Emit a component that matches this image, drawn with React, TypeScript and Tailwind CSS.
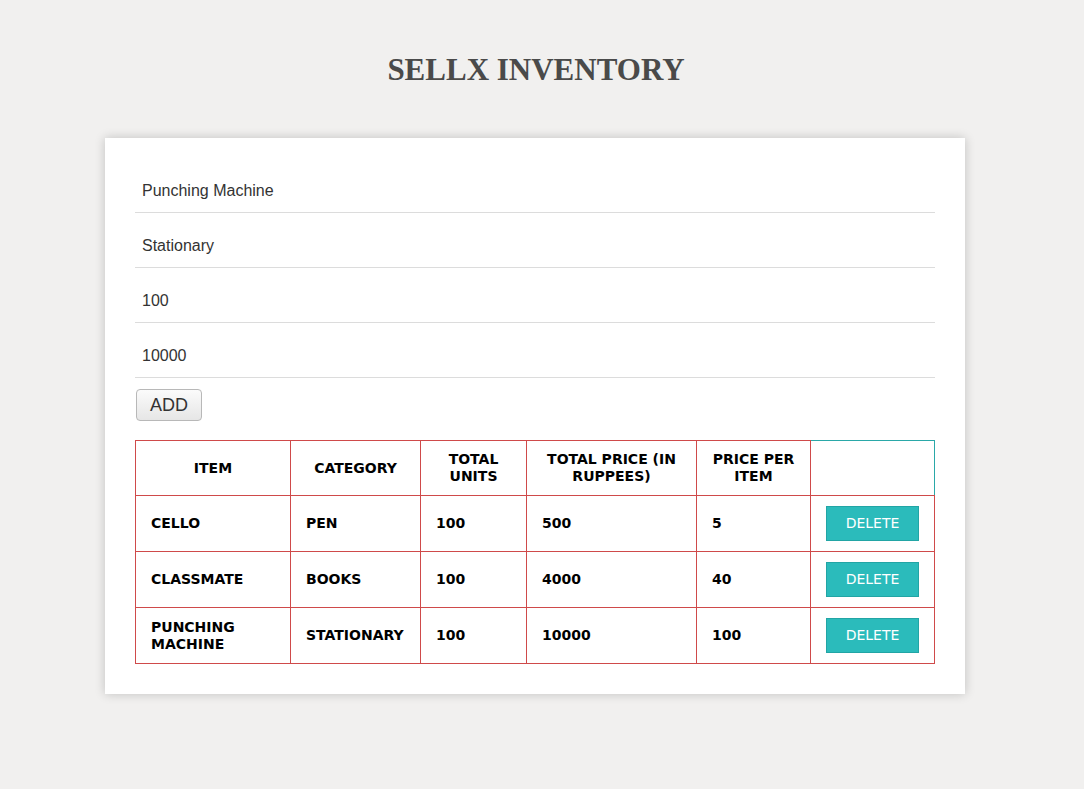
import React from "react";

const rows = [
  { item: "CELLO", cat: "PEN", units: "100", total: "500", per: "5" },
  { item: "CLASSMATE", cat: "BOOKS", units: "100", total: "4000", per: "40" },
  { item: "PUNCHING MACHINE", cat: "STATIONARY", units: "100", total: "10000", per: "100" },
];

export default function App() {
  const inputs = ["Punching Machine", "Stationary", "100", "10000"];
  return (
    <div className="min-h-[789px] bg-[#f1f0ef] pt-[51px]">
      <h1 className="pr-[12px] text-center text-[31px] leading-[38px] font-bold text-[#4a4a4a] [font-family:'Liberation_Serif','Times_New_Roman',serif]">
        SELLX INVENTORY
      </h1>
      <div className="ml-[105px] mt-[49px] w-[860px] bg-white p-[30px] shadow-[0_0_10px_rgba(0,0,0,0.2)]">
        <div className="flex flex-col gap-[10px]">
          {inputs.map((v, i) => (
            <input
              key={i}
              defaultValue={v}
              className="h-[45px] border-0 border-b border-[#dcdcdc] px-[7px] pt-[2px] text-[16px] text-[#333] outline-none [font-family:'Liberation_Sans',Arial,sans-serif]"
            />
          ))}
        </div>
        <button className="ml-px mt-[11px] h-[32px] w-[66px] rounded-[4px] border border-[#b8b8b8] bg-gradient-to-b from-[#fbfbfb] to-[#e6e6e6] text-[18px] text-[#333] [font-family:'Liberation_Sans',Arial,sans-serif]">
          ADD
        </button>
        <table className="mt-[19px] w-[799px] table-fixed border-collapse text-[14px] font-bold text-black [font-family:'DejaVu_Sans',sans-serif]">
          <colgroup>
            <col className="w-[155px]" />
            <col className="w-[130px]" />
            <col className="w-[106px]" />
            <col className="w-[170px]" />
            <col className="w-[114px]" />
            <col className="w-[124px]" />
          </colgroup>
          <thead>
            <tr className="h-[55px]">
              {["ITEM", "CATEGORY", "TOTAL UNITS", "TOTAL PRICE (IN RUPPEES)", "PRICE PER ITEM"].map((h) => (
                <th key={h} className="border border-[#cf4a4a] px-[15px] text-center leading-[17px]">
                  {h}
                </th>
              ))}
              <th className="border border-[#2aa8a8] border-b-[#cf4a4a] border-l-[#cf4a4a]"></th>
            </tr>
          </thead>
          <tbody>
            {rows.map((r) => (
              <tr key={r.item} className="h-[56px]">
                <td className="border border-[#cf4a4a] px-[15px] leading-[17px]">{r.item}</td>
                <td className="border border-[#cf4a4a] px-[15px] leading-[17px]">{r.cat}</td>
                <td className="border border-[#cf4a4a] px-[15px] leading-[17px]">{r.units}</td>
                <td className="border border-[#cf4a4a] px-[15px] leading-[17px]">{r.total}</td>
                <td className="border border-[#cf4a4a] px-[15px] leading-[17px]">{r.per}</td>
                <td className="border border-[#cf4a4a] px-[15px]">
                  <button className="flex h-[35px] w-[93px] items-center justify-center border border-[#22a5a5] bg-[#2bbbbb] text-[14px] font-normal text-white [font-family:'DejaVu_Sans',sans-serif]">
                    DELETE
                  </button>
                </td>
              </tr>
            ))}
          </tbody>
        </table>
      </div>
    </div>
  );
}
